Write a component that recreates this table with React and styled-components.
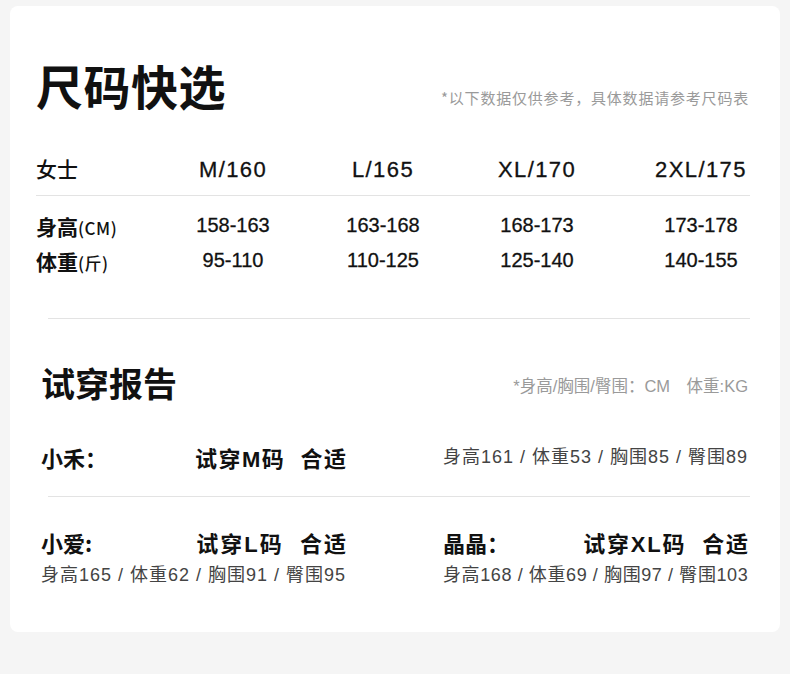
import React from "react";
import styled, { createGlobalStyle } from "styled-components";

const Global = createGlobalStyle`
  html, body { margin: 0; padding: 0; background: #f5f5f5; }
  body { font-family: "Liberation Sans", "Noto Sans CJK SC", sans-serif; color: #111; }
`;

const Page = styled.div`
  min-height: 674px;
  padding: 6px 10px 0 10px;
  box-sizing: border-box;
`;

const Card = styled.div`
  background: #fff;
  border-radius: 8px;
  height: 626px;
  box-sizing: border-box;
  padding: 51px 32px 0 26px;
  display: flex;
  flex-direction: column;
`;

const TitleRow = styled.div`
  display: flex;
  justify-content: space-between;
  align-items: flex-end;
  height: 56px;
`;

const Title = styled.h1`
  margin: 0;
  font-family: "Noto Sans CJK SC", sans-serif;
  font-size: 47px;
  line-height: 56px;
  font-weight: 700;
  letter-spacing: 0.5px;
  color: #111;
`;

const Note = styled.span`
  font-family: "Noto Sans CJK SC", sans-serif;
  font-size: 15px;
  letter-spacing: 0.8px;
  color: #9a9a9a;
  line-height: 20px;
  margin-bottom: 5px;
  margin-right: -1px;
  white-space: nowrap;
`;

const SizeGrid = styled.div`
  display: grid;
  grid-template-columns: 124px 146px 154px 154px 174px;
  align-items: center;
  height: ${(p) => p.$h}px;
  margin-top: ${(p) => p.$mt || 0}px;
  width: 714px;
  ${(p) => (p.$head ? "border-bottom: 1px solid #e3e3e3; padding-bottom: 7px; box-sizing: content-box;" : "")}
`;

const RowLabel = styled.div`
  font-family: "Noto Sans CJK SC", sans-serif;
  font-size: 21px;
  font-weight: ${(p) => (p.$bold ? 700 : 500)};
  color: #111;
  white-space: nowrap;
`;

const Unit = styled.span`
  font-size: 17px;
  font-weight: 500;
  letter-spacing: 0.5px;
`;

const Cell = styled.div`
  text-align: center;
  font-size: ${(p) => (p.$head ? 22 : 20)}px;
  letter-spacing: ${(p) => (p.$head ? 1.4 : 0)}px;
  color: #111;
  white-space: nowrap;
  margin-top: ${(p) => (p.$head ? 3 : 0)}px;
  -webkit-text-stroke: 0.3px #111;
`;

const Divider = styled.div`
  height: 1px;
  background: #e3e3e3;
  margin-top: ${(p) => p.$mt}px;
  margin-left: 12px;
  width: 702px;
`;

const Section = styled.div`
  margin-left: 5px;
  width: 707px;
  display: flex;
  flex-direction: column;
`;

const SectionHead = styled.div`
  display: flex;
  justify-content: space-between;
  align-items: center;
  height: 44px;
  margin-top: 42px;
`;

const SubTitle = styled.h2`
  margin: 0;
  font-family: "Noto Sans CJK SC", sans-serif;
  font-size: 34px;
  line-height: 44px;
  font-weight: 700;
  color: #111;
`;

const SmallNote = styled.span`
  font-family: "Liberation Sans", "Noto Sans CJK SC", sans-serif;
  font-size: 16.5px;
  color: #9a9a9a;
  white-space: pre;
  margin-top: 4px;
`;

const FirstRow = styled.div`
  display: flex;
  justify-content: space-between;
  align-items: center;
  height: 40px;
  margin-top: 32px;
`;

const PersonLine = styled.div`
  display: flex;
  justify-content: space-between;
  align-items: center;
  width: 305px;
  height: ${(p) => p.$h || 34}px;
`;

const Name = styled.span`
  font-family: "Noto Sans CJK SC", sans-serif;
  font-size: 22px;
  font-weight: 700;
  color: #111;
  white-space: pre;
`;

const Fit = styled.span`
  font-family: "Liberation Sans", "Noto Sans CJK SC", sans-serif;
  font-size: 22px;
  font-weight: 700;
  color: #111;
  white-space: pre;
  letter-spacing: ${(p) => p.$ls || 0}px;
  margin-right: -${(p) => p.$ls || 0}px;
`;

const Stats = styled.div`
  font-family: "Liberation Sans", "Noto Sans CJK SC", sans-serif;
  font-size: 18px;
  color: #444;
  white-space: pre;
  letter-spacing: ${(p) => p.$ls}px;
  line-height: 24px;
`;

const BottomGrid = styled.div`
  display: grid;
  grid-template-columns: 305px 305px;
  column-gap: 97px;
  margin-top: 28px;
`;

const Person = styled.div`
  display: flex;
  flex-direction: column;
  gap: 4px;
`;

const sizes = ["M/160", "L/165", "XL/170", "2XL/175"];
const heights = ["158-163", "163-168", "168-173", "173-178"];
const weights = ["95-110", "110-125", "125-140", "140-155"];

export default function App() {
  return (
    <>
      <Global />
      <Page>
        <Card>
          <TitleRow>
            <Title>尺码快选</Title>
            <Note>*以下数据仅供参考，具体数据请参考尺码表</Note>
          </TitleRow>

          <SizeGrid $head $h={40} $mt={35}>
            <RowLabel>女士</RowLabel>
            {sizes.map((s) => (
              <Cell $head key={s}>{s}</Cell>
            ))}
          </SizeGrid>
          <SizeGrid $h={35} $mt={12}>
            <RowLabel $bold>
              身高<Unit>(CM)</Unit>
            </RowLabel>
            {heights.map((s) => (
              <Cell key={s}>{s}</Cell>
            ))}
          </SizeGrid>
          <SizeGrid $h={35}>
            <RowLabel $bold>
              体重<Unit>(斤)</Unit>
            </RowLabel>
            {weights.map((s) => (
              <Cell key={s}>{s}</Cell>
            ))}
          </SizeGrid>

          <Divider $mt={40} />

          <Section>
            <SectionHead>
              <SubTitle>试穿报告</SubTitle>
              <SmallNote>*身高/胸围/臀围：CM　体重:KG</SmallNote>
            </SectionHead>
            <FirstRow>
              <PersonLine $h={40}>
                <Name>小禾：</Name>
                <Fit $ls={1.5}>试穿M码  合适</Fit>
              </PersonLine>
              <Stats $ls={1}>身高161 / 体重53 / 胸围85 / 臀围89</Stats>
            </FirstRow>
          </Section>

          <Divider $mt={19} />

          <Section>
            <BottomGrid>
              <Person>
                <PersonLine>
                  <Name>小爱:</Name>
                  <Fit $ls={2}>试穿L码  合适</Fit>
                </PersonLine>
                <Stats $ls={1}>身高165 / 体重62 / 胸围91 / 臀围95</Stats>
              </Person>
              <Person>
                <PersonLine>
                  <Name>晶晶：</Name>
                  <Fit $ls={1.8}>试穿XL码  合适</Fit>
                </PersonLine>
                <Stats $ls={0.6}>身高168 / 体重69 / 胸围97 / 臀围103</Stats>
              </Person>
            </BottomGrid>
          </Section>
        </Card>
      </Page>
    </>
  );
}
